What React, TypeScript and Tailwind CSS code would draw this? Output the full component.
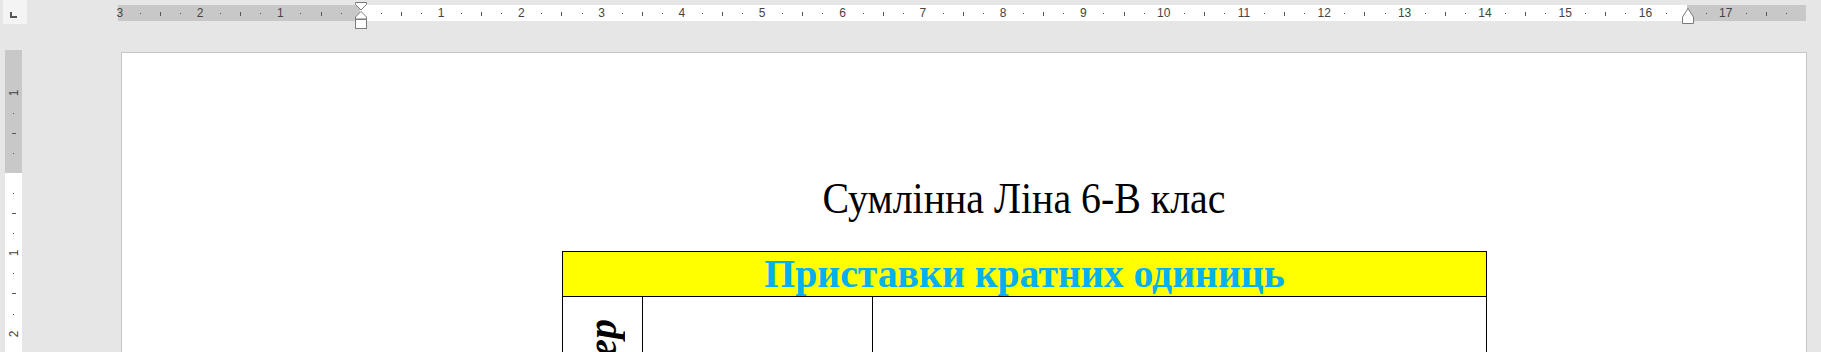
const PX_PER_CM = 80.3;
const H_ZERO = 242.7; // x of 0 cm inside the horizontal ruler
const V_ZERO = 123; // y of 0 cm inside the vertical ruler

type Mark = { pos: number; kind: "num" | "tick" | "dot"; label?: string };

function buildMarks(from: number, to: number): Mark[] {
  const marks: Mark[] = [];
  for (let q = from; q <= to; q++) {
    if (q === 0) continue;
    const cm = q / 4;
    if (q % 4 === 0) marks.push({ pos: cm, kind: "num", label: String(Math.abs(cm)) });
    else if (q % 2 === 0) marks.push({ pos: cm, kind: "tick" });
    else marks.push({ pos: cm, kind: "dot" });
  }
  return marks;
}

const hMarks = buildMarks(-12, 71);
const vMarks = buildMarks(-4, 9);

function HorizontalRuler() {
  return (
    <div className="relative ml-[91px] mt-[5px] flex h-[16px] w-[1688px]">
      <div className="w-[242px] bg-[#c8c8c8]" />
      <div className="flex-1 bg-white" />
      <div className="w-[119px] bg-[#c8c8c8]" />
      {hMarks.map((m, i) => {
        const left = H_ZERO + m.pos * PX_PER_CM;
        if (m.kind === "num")
          return (
            <span
              key={i}
              className="absolute top-0 -translate-x-1/2 text-[12px] leading-[16px] text-[#444]"
              style={{ left }}
            >
              {m.label}
            </span>
          );
        if (m.kind === "tick")
          return <span key={i} className="absolute top-[7px] h-[4px] w-px bg-[#555]" style={{ left: Math.round(left) }} />;
        return <span key={i} className="absolute top-[8px] h-px w-px bg-[#555]" style={{ left: Math.round(left) }} />;
      })}
      {/* left indent markers */}
      <svg className="absolute left-[237px] top-[-3px]" width="12" height="28" viewBox="0 0 12 28">
        <path d="M0.5 0.5 H11.5 V2.5 L6 8 L0.5 2.5 Z" fill="white" stroke="#7b7b7b" />
        <path d="M6 9.5 L11.5 15 V17 H0.5 V15 Z" fill="white" stroke="#7b7b7b" />
        <rect x="0.5" y="17.5" width="11" height="9" fill="white" stroke="#7b7b7b" />
      </svg>
      {/* right indent marker */}
      <svg className="absolute left-[1564px] top-[3px]" width="12" height="17" viewBox="0 0 12 17">
        <path d="M6 0.5 L11.5 9 V15.5 H0.5 V9 Z" fill="white" stroke="#7b7b7b" />
      </svg>
    </div>
  );
}

function VerticalRuler() {
  return (
    <div className="relative ml-[5px] flex w-[17px] flex-col">
      <div className="h-[123px] bg-[#c8c8c8]" />
      <div className="flex-1 bg-white" />
      {vMarks.map((m, i) => {
        const top = V_ZERO + m.pos * PX_PER_CM;
        if (m.kind === "num")
          return (
            <span
              key={i}
              className="absolute left-[3px] w-[11px] -translate-y-1/2 -rotate-90 text-center text-[12px] leading-[12px] text-[#444]"
              style={{ top }}
            >
              {m.label}
            </span>
          );
        if (m.kind === "tick")
          return <span key={i} className="absolute left-[7px] h-px w-[4px] bg-[#555]" style={{ top: Math.round(top) }} />;
        return <span key={i} className="absolute left-[8px] h-px w-px bg-[#555]" style={{ top: Math.round(top) }} />;
      })}
    </div>
  );
}

function Page() {
  return (
    <div className="ml-[99px] mt-[2px] w-[1686px] border border-[#c6c6c6] bg-white font-['Liberation_Serif',serif]">
      <div className="ml-[239px] w-[1326px] pt-[119px]">
        <div className="text-center text-[45.3px] leading-[52px] text-black">
          <span className="inline-block scale-x-[0.88]">Сумлінна Ліна 6-В клас</span>
        </div>
        <div className="ml-[201px] mt-[27px] w-[925px] border border-black">
          <div className="flex h-[45px] items-center justify-center border-b border-black bg-[#ffff00] text-[39.7px] font-bold leading-[44px] text-[#00b0f0]">
            Приставки кратних одиниць
          </div>
          <div className="flex h-[300px]">
            <div className="flex w-[80px] justify-center border-r border-black pt-[22px]">
              <span className="rotate-180 self-start text-[40px] font-bold italic leading-[40px] [writing-mode:vertical-rl]">
                Номер
              </span>
            </div>
            <div className="w-[230px] border-r border-black" />
            <div className="flex-1" />
          </div>
        </div>
      </div>
    </div>
  );
}

export default function App() {
  return (
    <div className="flex h-[352px] w-[1821px] flex-col overflow-hidden bg-[#e6e6e6] font-['Liberation_Sans',sans-serif]">
      <div className="flex h-[50px] shrink-0">
        <div className="relative ml-[3px] h-[24px] w-[24px] bg-[#f4f4f4]">
          <span className="absolute left-[7px] top-[12px] h-[6px] w-[2px] bg-[#555]" />
          <span className="absolute left-[7px] top-[16px] h-[2px] w-[7px] bg-[#555]" />
        </div>
        <HorizontalRuler />
      </div>
      <div className="flex flex-1">
        <VerticalRuler />
        <Page />
      </div>
    </div>
  );
}
